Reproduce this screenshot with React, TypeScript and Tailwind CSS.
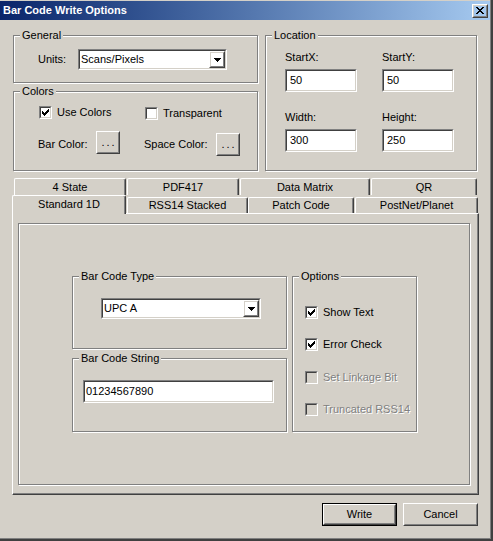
import React from 'react';

type P = { className?: string; inner?: string; children?: React.ReactNode };

function Raised({ className = '', inner = '', children }: P) {
  return (
    <div className={`border border-t-white border-l-white border-r-[#404040] border-b-[#404040] ${className}`}>
      <div className={`w-full h-full border border-t-[#d4d0c8] border-l-[#d4d0c8] border-r-[#808080] border-b-[#808080] flex items-center justify-center ${inner}`}>
        {children}
      </div>
    </div>
  );
}

function Sunken({ className = '', inner = 'bg-white', children }: P) {
  return (
    <div className={`border border-t-[#808080] border-l-[#808080] border-r-white border-b-white ${className}`}>
      <div className={`w-full h-full border border-t-[#404040] border-l-[#404040] border-r-[#d4d0c8] border-b-[#d4d0c8] flex items-center overflow-hidden ${inner}`}>
        {children}
      </div>
    </div>
  );
}

function Check({ checked, disabled, label }: { checked?: boolean; disabled?: boolean; label: string }) {
  return (
    <div className="flex items-center">
      <Sunken className="w-[13px] h-[13px] shrink-0" inner={disabled ? 'bg-[#d4d0c8]' : 'bg-white'}>
        {checked && (
          <svg width="9" height="9" viewBox="0 0 9 9" shapeRendering="crispEdges" className="block">
            <path d="M1 3h1v3H1zM2 4h1v3H2zM3 5h1v3H3zM4 4h1v3H4zM5 3h1v3H5zM6 2h1v3H6zM7 1h1v3H7z" fill="#000" />
          </svg>
        )}
      </Sunken>
      <span className={disabled ? 'ml-[5px] text-[#808080] [text-shadow:1px_1px_0_#fff]' : 'ml-[5px]'}>{label}</span>
    </div>
  );
}

function Combo({ value, className = '' }: { value: string; className?: string }) {
  return (
    <Sunken className={className}>
      <span className="flex-1 pl-[1px] whitespace-nowrap">{value}</span>
      <Raised className="w-[16px] h-full shrink-0">
        <svg width="7" height="4" viewBox="0 0 7 4" shapeRendering="crispEdges" className="block">
          <path d="M0 0h7v1H0zM1 1h5v1H1zM2 2h3v1H2zM3 3h1v1H3z" fill="#000" />
        </svg>
      </Raised>
    </Sunken>
  );
}

function Group({ label, className = '', children }: { label: string; className?: string; children?: React.ReactNode }) {
  return (
    <fieldset className={`border border-[#808080] shadow-[inset_1px_1px_0_#fff,1px_1px_0_#fff] shrink-0 ${className}`}>
      <legend className="ml-[6px] px-[2px] leading-[13px] bg-[#d4d0c8]">{label}</legend>
      {children}
    </fieldset>
  );
}

function Tab({ label, className = '' }: { label: string; className?: string }) {
  return (
    <div
      className={`border-l border-t border-l-white border-t-white border-r border-r-[#404040] shadow-[inset_-1px_0_0_#808080] rounded-tl-[2px] rounded-tr-[2px] flex items-center justify-center whitespace-nowrap shrink-0 bg-[#d4d0c8] ${className}`}
    >
      {label}
    </div>
  );
}

export default function App() {
  return (
    <div className="w-[493px] h-[541px] bg-[#d4d0c8] border-r-2 border-b-2 border-[#404040] shadow-[inset_-1px_-1px_0_#808080] flex flex-col font-['Liberation_Sans',Arial,sans-serif] text-[11px] leading-[13px] text-black overflow-hidden pt-[1px]">
      {/* Title bar */}
      <div className="h-[19px] mr-[1px] flex items-center bg-linear-to-r from-[#0a246a] to-[#a6caf0] pl-[3px] pr-[2px] shrink-0">
        <span className="font-bold text-white text-[11px]">Bar Code Write Options</span>
        <Raised className="ml-auto w-[16px] h-[14px]">
          <svg width="8" height="7" viewBox="0 0 8 7" shapeRendering="crispEdges" className="block">
            <path d="M0 0h2v1H0zM6 0h2v1H6zM1 1h2v1H1zM5 1h2v1H5zM2 2h4v1H2zM3 3h2v1H3zM2 4h4v1H2zM1 5h2v1H1zM5 5h2v1H5zM0 6h2v1H0zM6 6h2v1H6z" fill="#000" />
          </svg>
        </Raised>
      </div>

      {/* Top section */}
      <div className="flex items-start ml-[13px] mt-[9px]">
        <div className="flex flex-col w-[245px]">
          <Group label="General" className="w-[245px] h-[54px]">
            <div className="flex items-center pl-[24px] mt-[7px]">
              <span className="w-[40px]">Units:</span>
              <Combo value="Scans/Pixels" className="w-[149px] h-[21px]" />
            </div>
          </Group>
          <Group label="Colors" className="w-[245px] h-[86px] mt-[2px]">
            <div className="flex items-center pl-[25px] mt-[7px]">
              <div className="w-[106px]">
                <Check checked label="Use Colors" />
              </div>
              <div className="mt-[2px]">
                <Check label="Transparent" />
              </div>
            </div>
            <div className="flex items-start pl-[24px] mt-[11px]">
              <span className="w-[58px] mt-[7px]">Bar Color:</span>
              <Raised className="w-[24px] h-[23px]" inner="tracking-[2px] pl-[2px]">...</Raised>
              <span className="w-[72px] ml-[24px] mt-[7px]">Space Color:</span>
              <Raised className="w-[24px] h-[23px] mt-[2px]" inner="tracking-[2px] pl-[2px]">...</Raised>
            </div>
          </Group>
        </div>
        <Group label="Location" className="w-[212px] h-[142px] ml-[7px]">
          <div className="flex pl-[19px]">
            <div className="flex flex-col w-[72px]">
              <span className="mt-[9px]">StartX:</span>
              <Sunken className="w-[72px] h-[23px] mt-[5px]"><span className="pl-[3px]">50</span></Sunken>
              <span className="mt-[19px]">Width:</span>
              <Sunken className="w-[72px] h-[23px] mt-[5px]"><span className="pl-[3px]">300</span></Sunken>
            </div>
            <div className="flex flex-col w-[72px] ml-[25px]">
              <span className="mt-[9px]">StartY:</span>
              <Sunken className="w-[72px] h-[23px] mt-[5px]"><span className="pl-[3px]">50</span></Sunken>
              <span className="mt-[19px]">Height:</span>
              <Sunken className="w-[72px] h-[23px] mt-[5px]"><span className="pl-[3px]">250</span></Sunken>
            </div>
          </div>
        </Group>
      </div>

      {/* Tabs back row */}
      <div className="flex ml-[14px] mt-[7px] h-[17px]">
        <Tab label="4 State" className="w-[112px] h-[17px] mr-[1px]" />
        <Tab label="PDF417" className="w-[112px] h-[17px] mr-[1px]" />
        <Tab label="Data Matrix" className="w-[130px] h-[17px] mr-[1px]" />
        <Tab label="QR" className="w-[106px] h-[17px]" />
      </div>
      {/* Tabs front row */}
      <div className="flex items-end ml-[12px] h-[18px]">
        <Tab label="Standard 1D" className="w-[114px] h-[19px] -mb-[1px] relative z-10 mr-[1px] pb-[2px]" />
        <Tab label="RSS14 Stacked" className="w-[121px] h-[16px]" />
        <Tab label="Patch Code" className="w-[106px] h-[16px] mr-[1px]" />
        <Tab label="PostNet/Planet" className="w-[123px] h-[16px]" />
      </div>

      {/* Tab panel */}
      <div className="ml-[12px] w-[467px] h-[282px] border-l border-t border-l-white border-t-white border-r border-b border-r-[#404040] border-b-[#404040] shadow-[inset_-1px_-1px_0_#808080] pl-[5px] pt-[9px] shrink-0">
        <div className="w-[452px] h-[262px] border border-[#808080] shadow-[inset_1px_1px_0_#fff,1px_1px_0_#fff]">
          <div className="flex items-start ml-[53px] mt-[46px]">
            <div className="flex flex-col w-[215px]">
              <Group label="Bar Code Type" className="w-[215px] h-[79px]">
                <Combo value="UPC A" className="w-[160px] h-[21px] ml-[28px] mt-[15px]" />
              </Group>
              <Group label="Bar Code String" className="w-[215px] h-[80px] mt-[3px]">
                <Sunken className="w-[191px] h-[23px] ml-[10px] mt-[15px]">
                  <span className="pl-[1px]">01234567890</span>
                </Sunken>
              </Group>
            </div>
            <Group label="Options" className="w-[125px] h-[162px] ml-[5px]">
              <div className="flex flex-col pl-[12px]">
                <div className="mt-[23px]"><Check checked label="Show Text" /></div>
                <div className="mt-[19px]"><Check checked label="Error Check" /></div>
                <div className="mt-[20px]"><Check disabled label="Set Linkage Bit" /></div>
                <div className="mt-[19px]"><Check disabled label="Truncated RSS14" /></div>
              </div>
            </Group>
          </div>
        </div>
      </div>

      {/* Buttons */}
      <div className="flex ml-[322px] mt-[8px]">
        <div className="w-[75px] h-[23px] border border-black">
          <Raised className="w-full h-full">Write</Raised>
        </div>
        <Raised className="w-[75px] h-[23px] ml-[6px]">Cancel</Raised>
      </div>
    </div>
  );
}
